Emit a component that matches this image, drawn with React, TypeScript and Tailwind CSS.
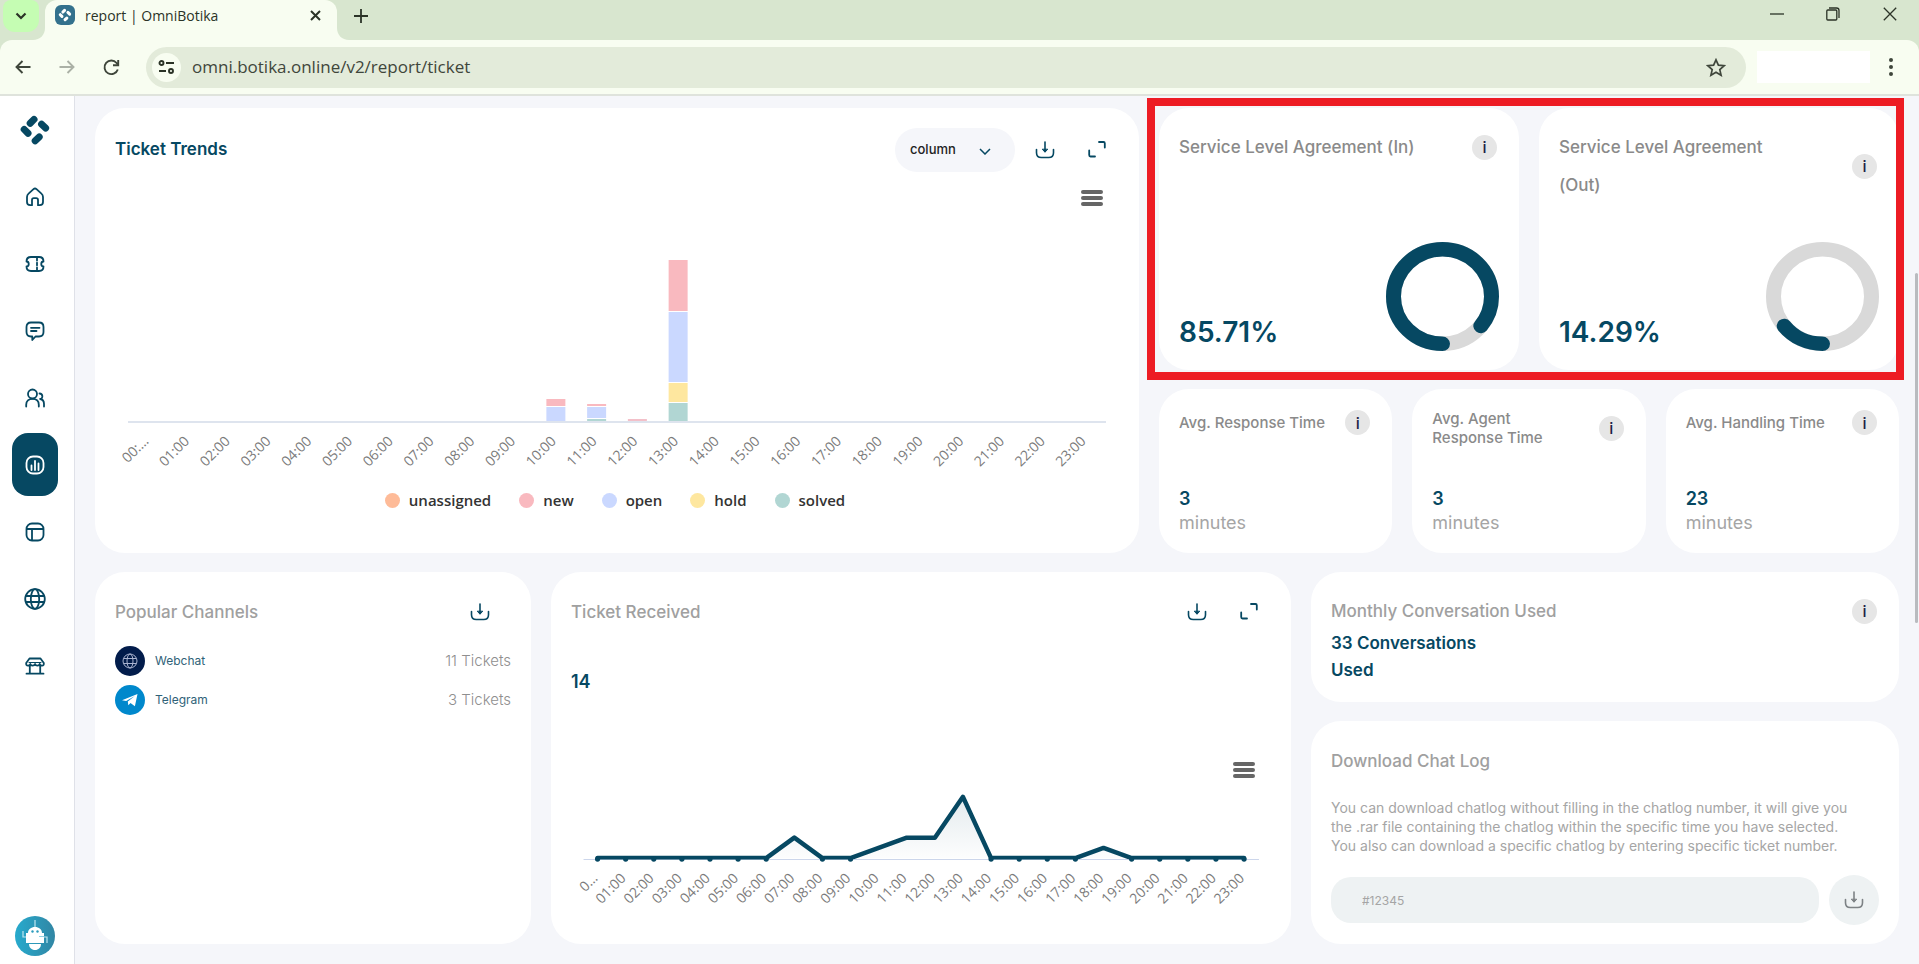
import type { ReactNode } from "react";
import clsx from "clsx";

const HOURS = Array.from({ length: 24 }, (_, i) => `${String(i).padStart(2, "0")}:00`);

const SERIES = [
    { name: "unassigned", dot: "bg-[#febb98]" },
    { name: "new", dot: "bg-[#f9b9bf]" },
    { name: "open", dot: "bg-[#cad8ff]" },
    { name: "hold", dot: "bg-[#fee79f]" },
    { name: "solved", dot: "bg-[#b1d6d3]" },
];

// bars per hour, each part listed from the axis upwards
const BARS = [
    { hour: 10, parts: [{ h: 15, fill: "#cad8ff" }, { h: 8, fill: "#f9b9bf" }] },
    { hour: 11, parts: [{ h: 3, fill: "#b1d6d3" }, { h: 12, fill: "#cad8ff" }, { h: 3, fill: "#f9b9bf" }] },
    { hour: 12, parts: [{ h: 3, fill: "#f3c0c9" }] },
    {
        hour: 13,
        parts: [
            { h: 19, fill: "#b1d6d3" },
            { h: 20, fill: "#fee79f" },
            { h: 71, fill: "#cad8ff" },
            { h: 52, fill: "#f9b9bf" },
        ],
    },
];

const RECEIVED = [0, 0, 0, 0, 0, 0, 0, 2, 0, 0, 1, 2, 2, 6, 0, 0, 0, 0, 1, 0, 0, 0, 0, 0];

const AVERAGES = [
    { title: "Avg. Response Time", value: 3 },
    { title: "Avg. Agent Response Time", value: 3 },
    { title: "Avg. Handling Time", value: 23 },
];

function Card({ className, children }: { className?: string; children: ReactNode }) {
    return <section className={clsx("rounded-[30px] bg-white px-5 pt-5", className)}>{children}</section>;
}

function InfoBadge() {
    return (
        <button
            aria-label="Info"
            className="mr-0.5 flex size-[25px] shrink-0 items-center justify-center rounded-full bg-[#e6e6e6] text-base font-medium text-[#1d2145]"
        >
            i
        </button>
    );
}

function DownloadIcon() {
    return (
        <svg width="20" height="20" viewBox="0 0 20 20" fill="none" stroke="currentColor" strokeWidth="1.6" strokeLinecap="round">
            <path d="M1.5 9.5v3.2c0 3 1.8 4.8 4.8 4.8h7.4c3 0 4.8-1.8 4.8-4.8V9.5" />
            <path d="M10 2v9.5" />
            <path d="M7.5 9.5 10 12.2l2.5-2.7z" fill="currentColor" strokeLinejoin="round" strokeWidth="1" />
        </svg>
    );
}

function IconButton({ label, children }: { label: string; children: ReactNode }) {
    return (
        <button aria-label={label} className="flex h-10 w-11 items-center justify-center text-[#064862]">
            {children}
        </button>
    );
}

function ExpandIcon() {
    return (
        <svg width="18" height="18" viewBox="0 0 18 18" fill="none" stroke="currentColor" strokeWidth="1.8" strokeLinecap="round" strokeLinejoin="round">
            <path d="M11 1h4.500q1.300 0 1.300 1.300V6.500" />
            <path d="M1.200 9.500V14q0 1.500 1.300 1.500H7" />
        </svg>
    );
}

function ChartMenu() {
    return (
        <button aria-label="Chart menu" className="mr-4 flex w-[22px] flex-col gap-0.5 self-end">
            <span className="h-1 rounded-full bg-[#666]" />
            <span className="h-1 rounded-full bg-[#666]" />
            <span className="h-1 rounded-full bg-[#666]" />
        </button>
    );
}

function TrendsChart() {
    const step = 40.75;
    return (
        <svg viewBox="0 0 1004 225" className="mt-11 block w-full" role="img" aria-label="Ticket trends by hour">
            {BARS.map(({ hour, parts }) => {
                let y = 172;
                return parts.map((p, i) => {
                    y -= p.h;
                    return (
                        <rect key={`${hour}-${i}`} x={13 + step * (hour + 0.5) - 9.5} y={y} width="19" height={Math.max(p.h - 1, 2)} fill={p.fill} />
                    );
                });
            })}
            <path d="M13 172h978" stroke="#d3dbe8" strokeWidth="1.5" />
            <g fill="#7b7b7b" fontSize="14" fontFamily="'Open Sans', 'Noto Sans', sans-serif" textAnchor="end">
                {HOURS.map((h, i) => {
                    const x = 13 + step * (i + 0.5) + 1;
                    return (
                        <text key={h} x={x} y="192" transform={`rotate(-45 ${x} 192)`}>
                            {i === 0 ? "00:…" : h}
                        </text>
                    );
                })}
            </g>
        </svg>
    );
}

function ReceivedChart() {
    const pts = RECEIVED.map((v, i) => [26.5 + i * 28.07, 73 - v * 10.2]);
    const line = pts.map((p) => p.join(",")).join(" ");
    return (
        <svg viewBox="0 0 699 125" className="mt-[7px] block w-full" role="img" aria-label="Tickets received by hour">
            <defs>
                <linearGradient id="area" x1="0" y1="0" x2="0" y2="1">
                    <stop offset="0" stopColor="#064862" stopOpacity="0.11" />
                    <stop offset="1" stopColor="#064862" stopOpacity="0.01" />
                </linearGradient>
                <clipPath id="plot">
                    <rect width="699" height="74.5" />
                </clipPath>
            </defs>
            <path d="M12.5 74.5H687" stroke="#ccd6eb" />
            <polygon points={`${pts[0][0]},73 ${line} ${pts[23][0]},73`} fill="url(#area)" />
            <polyline points={line} fill="none" stroke="#064862" strokeWidth="4.5" strokeLinejoin="round" strokeLinecap="round" clipPath="url(#plot)" />
            {pts.map(([x, y], i) => RECEIVED[i] === 0 && <circle key={i} cx={x} cy={y + 1} r="2.6" fill="#064862" />)}
            <g fill="#7b7b7b" fontSize="14" fontFamily="'Open Sans', 'Noto Sans', sans-serif" textAnchor="end">
                {HOURS.map((h, i) => {
                    const x = pts[i][0] + 1;
                    return (
                        <text key={h} x={x} y="94" transform={`rotate(-45 ${x} 94)`}>
                            {i === 0 ? "0…" : h}
                        </text>
                    );
                })}
            </g>
        </svg>
    );
}

function Donut({ percent }: { percent: number }) {
    return (
        <svg width="113" height="109" viewBox="0 0 113 113" preserveAspectRatio="none" fill="none" strokeWidth="15">
            <circle cx="56.5" cy="56.5" r="49" stroke="#d9d9d9" />
            <circle
                cx="56.5"
                cy="56.5"
                r="49"
                stroke="#064862"
                strokeLinecap="round"
                pathLength="100"
                strokeDasharray={`${percent} 100`}
                transform="rotate(90 56.5 56.5)"
            />
        </svg>
    );
}

function SlaCard({ title, percent }: { title: string; percent: number }) {
    return (
        <Card className="flex min-h-[262px] flex-col justify-between pb-[19px]">
            <div className="flex items-center justify-between">
                <h2 className="max-w-[240px] text-[17px] leading-[38px] font-medium text-[#8a8a8a]">{title}</h2>
                <InfoBadge />
            </div>
            <div className="flex items-end justify-between">
                <span className="text-[28px] leading-[38px] font-semibold text-[#064862]">{percent}%</span>
                <Donut percent={percent} />
            </div>
        </Card>
    );
}

function Logo({ className }: { className?: string }) {
    return (
        <svg viewBox="0 0 32 32" className={className} stroke="currentColor" strokeWidth="7" strokeLinecap="round">
            <path d="M11.2 9.2 15 5.4M22.6 10.2l4 3.8M5.2 15.4l3.8 3.8M16.2 26.8l4-3.8" />
        </svg>
    );
}

const NAV: { label: string; active?: boolean; icon: ReactNode }[] = [
    {
        label: "Home",
        icon: <path d="M2 10c0-1.5.6-2.600 1.800-3.600l4.700-4.200c.9-.8 2.100-.8 3 0l4.700 4.200C17.400 7.400 18 8.500 18 10v5c0 2.200-1 3.200-3.200 3.200H13V13c0-1.200-.6-1.800-1.800-1.800H8.800C7.600 11.200 7 11.800 7 13v5.200H5.200C3 18.200 2 17.200 2 15z" />,
    },
    {
        label: "Tickets",
        icon: (
            <>
                <path d="M1.500 7.500C1.500 4.300 2.800 3 6 3h8c3.200 0 4.500 1.300 4.500 4.500-3 0-3 5 0 5 0 3.200-1.300 4.500-4.500 4.500H6c-3.200 0-4.500-1.300-4.500-4.500 3 0 3-5 0-5z" />
                <path d="M12 3v3.500M12 8.700v2.600M12 13.500V17" />
            </>
        ),
    },
    {
        label: "Chats",
        icon: (
            <>
                <path d="M6 1.500h8c3 0 4.500 1.500 4.500 4.500v5c0 3-1.500 4.500-4.500 4.500h-3.500L7.300 19v-3.500H6c-3 0-4.500-1.500-4.500-4.500V6c0-3 1.500-4.500 4.500-4.500z" />
                <path d="M6 6.800h8.500M6 10h5.500" />
            </>
        ),
    },
    {
        label: "Customers",
        icon: (
            <>
                <circle cx="7.500" cy="6" r="4.500" />
                <path d="M1.200 18.500v-1.700c0-3.700 2.400-6 6.300-6s6.300 2.300 6.300 6v1.700M14.500 5.500c3.600 0 3.800 5.300.6 5.500 2.800.3 3.900 2 3.900 5v2.500" />
            </>
        ),
    },
    {
        label: "Reports",
        active: true,
        icon: (
            <>
                <rect x="1.500" y="1.500" width="17" height="17" rx="6.500" />
                <path d="M6.500 10.500v4.500M10 6v9M13.500 8.500V15" />
            </>
        ),
    },
    {
        label: "Boards",
        icon: (
            <>
                <rect x="1.500" y="1.500" width="17" height="17" rx="5.500" />
                <path d="M2 7h16M7 7v11" />
            </>
        ),
    },
    {
        label: "Channels",
        icon: (
            <>
                <circle cx="10" cy="10" r="9.800" />
                <ellipse cx="10" cy="10" rx="4.200" ry="9.800" />
                <path d="M1 7h18M1 13h18" />
            </>
        ),
    },
    {
        label: "Store",
        icon: (
            <>
                <path d="M4.500 2.500h11L18.800 7c.3 1.700-.5 2.700-1.700 2.700-1.500 0-2.200-.6-2.400-1.700-.3 1.100-1 1.700-2.300 1.700S10.300 9.100 10 8c-.3 1.100-1.100 1.700-2.400 1.700S5.600 9.100 5.300 8c-.2 1.100-.9 1.700-2.400 1.700C1.700 9.700.9 8.700 1.200 7zM4.800 9.700v7.800M15.200 9.700v7.800M1.500 17.700h17" />
                <path d="M4 6.500h12" strokeWidth="1" />
            </>
        ),
    },
];

function BotAvatar() {
    return (
        <svg width="40" height="40" viewBox="0 0 40 40">
            <defs>
                <linearGradient id="bot" x1="0" x2="1">
                    <stop offset="0" stopColor="#27aacd" />
                    <stop offset="1" stopColor="#3186a4" />
                </linearGradient>
            </defs>
            <circle cx="20" cy="20" r="20" fill="url(#bot)" />
            <path d="M20 4v7M8 15v6h4M32 27v-6h-4" stroke="#bfe6f1" fill="none" strokeWidth="1.200" />
            <path d="M13 17c0-3.500 3-6 7-6s7 2.500 7 6h2v10H11V17z" fill="#fff" />
            <path d="M14 28h12c0 3.500-2.500 6-6 6s-6-2.500-6-6z" fill="#fff" />
            <circle cx="17.500" cy="15.500" r="1.200" fill="#2a9bbd" />
            <circle cx="22.500" cy="15.500" r="1.200" fill="#2a9bbd" />
            <path d="M24 20.500h5" stroke="#8fd0e2" />
        </svg>
    );
}

function Browser() {
    return (
        <header className="bg-[#d8e6cf] font-['Open_Sans','Noto_Sans',sans-serif] text-[#2b3327]">
            <div className="flex h-10 items-start pl-[3px]">
                <button aria-label="Search tabs" className="flex h-8 w-9 items-center justify-center rounded-t-lg rounded-b-xl bg-[#c5fdb3]">
                    <svg width="12" height="8" viewBox="0 0 12 8" fill="none" stroke="currentColor" strokeWidth="2.200">
                        <path d="m1.500 1.500 4.500 4.500 4.500-4.500" />
                    </svg>
                </button>
                <div className="relative ml-1.5 flex h-full w-[292px] items-start rounded-t-xl bg-[#f8fdf1] pt-[5px] pl-2.5">
                    <svg className="absolute bottom-0 -left-3 text-[#f8fdf1]" width="12" height="12" viewBox="0 0 12 12" fill="currentColor">
                        <path d="M12 0v12H0C7 12 12 7 12 0z" />
                    </svg>
                    <svg className="absolute -right-3 bottom-0 text-[#f8fdf1]" width="12" height="12" viewBox="0 0 12 12" fill="currentColor">
                        <path d="M0 0v12h12C5 12 0 7 0 0z" />
                    </svg>
                    <span className="flex size-5 items-center justify-center rounded-md bg-[#33718d] text-white">
                        <Logo className="size-3.5" />
                    </span>
                    <span className="ml-2.5 text-sm leading-[22px]">report | OmniBotika</span>
                    <button aria-label="Close tab" className="mr-3 ml-auto flex size-5 items-center justify-center">
                        <svg width="11" height="11" viewBox="0 0 11 11" stroke="currentColor" strokeWidth="2">
                            <path d="m1 1 9 9M10 1l-9 9" />
                        </svg>
                    </button>
                </div>
                <button aria-label="New tab" className="ml-3 flex h-8 w-6 items-center justify-center">
                    <svg width="14" height="14" viewBox="0 0 14 14" stroke="currentColor" strokeWidth="1.800">
                        <path d="M7 0v14M0 7h14" />
                    </svg>
                </button>
                <div className="ml-auto flex h-7 items-center">
                    <button aria-label="Minimize" className="flex w-14 justify-center">
                        <svg width="14" height="14" viewBox="0 0 14 14" stroke="currentColor" strokeWidth="1.300">
                            <path d="M0 7h14" />
                        </svg>
                    </button>
                    <button aria-label="Restore" className="flex w-14 justify-center">
                        <svg width="14" height="14" viewBox="0 0 14 14" fill="none" stroke="currentColor" strokeWidth="1.300">
                            <rect x=".8" y="3" width="10" height="10" rx="1" />
                            <path d="M3 1h7.500Q13 1 13 3.500V11" />
                        </svg>
                    </button>
                    <button aria-label="Close" className="flex w-[58px] justify-center">
                        <svg width="14" height="14" viewBox="0 0 14 14" stroke="currentColor" strokeWidth="1.300">
                            <path d="m.8.8 12.400 12.400M13.200.8.8 13.200" />
                        </svg>
                    </button>
                </div>
            </div>
            <div className="flex h-14 items-center rounded-t-xl border-b-2 border-[#dfe3dc] bg-[#f8fdf1] pr-[18px] pl-[11px]">
                <button aria-label="Back" className="flex size-6 items-center justify-center">
                    <svg width="16" height="14" viewBox="0 0 16 14" fill="none" stroke="#3f463b" strokeWidth="1.900">
                        <path d="M15.500 7H1.500M7.500 1l-6 6 6 6" />
                    </svg>
                </button>
                <button aria-label="Forward" className="ml-5 flex size-6 items-center justify-center">
                    <svg width="16" height="14" viewBox="0 0 16 14" fill="none" stroke="#abb1a6" strokeWidth="1.900">
                        <path d="M.5 7h14M8.500 1l6 6-6 6" />
                    </svg>
                </button>
                <button aria-label="Reload" className="ml-5 flex size-6 items-center justify-center">
                    <svg width="17" height="17" viewBox="0 0 17 17" fill="none" stroke="#3f463b" strokeWidth="1.900">
                        <path d="M14.800 10.500A6.800 6.800 0 1 1 13.600 4L15 5.500" />
                        <path d="M15.200 1v5.200H10" />
                    </svg>
                </button>
                <div className="ml-[23px] flex h-[41px] flex-1 items-center rounded-full bg-[#e3ebda] pr-5 pl-1.5">
                    <button aria-label="Site information" className="flex size-[29px] items-center justify-center rounded-full bg-[#f8fdf1]">
                        <svg width="17" height="14" viewBox="0 0 17 14" fill="none" stroke="#2b3327" strokeWidth="1.900">
                            <circle cx="3.500" cy="3" r="2" />
                            <path d="M8 3h8M1 11h7" />
                            <circle cx="13" cy="11" r="2" />
                        </svg>
                    </button>
                    <input
                        aria-label="Address"
                        defaultValue="omni.botika.online/v2/report/ticket"
                        className="ml-[11px] flex-1 bg-transparent text-[17px] text-[#3f463b] outline-none"
                    />
                    <button aria-label="Bookmark this tab">
                        <svg width="20" height="19" viewBox="0 0 20 19" fill="none" stroke="#3f463b" strokeWidth="1.700">
                            <path d="m10 1.800 2.400 5.400 5.800.5-4.400 3.900 1.300 5.700L10 14.300l-5.100 3 1.300-5.700L1.800 7.700l5.800-.5z" />
                        </svg>
                    </button>
                </div>
                <div className="ml-[11px] h-8 w-[113px] bg-white" />
                <button aria-label="Menu" className="ml-[11px] flex h-6 w-5 items-center justify-center">
                    <svg width="4" height="18" viewBox="0 0 4 18" fill="#3f463b">
                        <circle cx="2" cy="2" r="2" />
                        <circle cx="2" cy="9" r="2" />
                        <circle cx="2" cy="16" r="2" />
                    </svg>
                </button>
            </div>
        </header>
    );
}

export default function App() {
    return (
        <div className="relative flex h-screen flex-col overflow-hidden bg-[#f5f6fa] font-['Inter',sans-serif]">
            <Browser />
            <div className="flex min-h-0 flex-1">
                <aside className="flex w-[75px] shrink-0 flex-col items-center border-r border-[#dfe1e8] bg-white pt-[18px] pr-1 pb-2">
                    <Logo className="size-8 text-[#064862]" />
                    <nav className="mt-[19px] flex flex-col gap-1">
                        {NAV.map((item) => (
                            <a
                                key={item.label}
                                href="#"
                                aria-label={item.label}
                                className={clsx(
                                    "flex h-[63px] w-[46px] items-center justify-center rounded-2xl",
                                    item.active ? "bg-[#064862] text-white" : "text-[#064862]"
                                )}
                            >
                                <svg width="22" height="22" viewBox="-1 -1 22 22" fill="none" stroke="currentColor" strokeWidth="1.800" strokeLinecap="round" strokeLinejoin="round">
                                    {item.icon}
                                </svg>
                            </a>
                        ))}
                    </nav>
                    <button aria-label="Account" className="mt-auto">
                        <BotAvatar />
                    </button>
                </aside>

                <main className="flex min-w-0 flex-1 flex-col gap-[19px] px-5 pt-3">
                    <div className="grid grid-cols-12 gap-5">
                        <Card className="col-span-7 flex flex-col pb-5">
                            <div className="flex items-center gap-2">
                                <h2 className="mr-auto text-[17px] font-semibold text-[#064862]">Ticket Trends</h2>
                                <div className="relative">
                                    <select
                                        aria-label="Chart type"
                                        className="h-11 w-[120px] appearance-none rounded-full bg-[#f5f6fa] pl-[15px] text-[13px] font-medium text-[#222]"
                                    >
                                        <option>column</option>
                                    </select>
                                    <svg className="pointer-events-none absolute top-5 right-6 text-[#064862]" width="12" height="7" viewBox="0 0 12 7" fill="none" stroke="currentColor" strokeWidth="1.500">
                                        <path d="m1 1 5 5 5-5" />
                                    </svg>
                                </div>
                                <IconButton label="Download">
                                    <DownloadIcon />
                                </IconButton>
                                <IconButton label="Expand">
                                    <ExpandIcon />
                                </IconButton>
                            </div>
                            <div className="mt-[18px] flex flex-col">
                                <ChartMenu />
                            </div>
                            <TrendsChart />
                            <ul className="mt-[15px] flex justify-center gap-7 pr-1 font-['Open_Sans','Noto_Sans',sans-serif] text-[15px] leading-5 font-semibold text-[#333]">
                                {SERIES.map((s) => (
                                    <li key={s.name} className="flex items-center gap-[9px]">
                                        <span className={clsx("size-[15px] rounded-full", s.dot)} />
                                        {s.name}
                                    </li>
                                ))}
                            </ul>
                        </Card>

                        <div className="col-span-5 flex flex-col gap-[19px]">
                            <div className="relative grid grid-cols-2 gap-5">
                                <SlaCard title="Service Level Agreement (In)" percent={85.71} />
                                <SlaCard title="Service Level Agreement (Out)" percent={14.29} />
                                <div className="pointer-events-none absolute -inset-y-2.5 -right-[5px] -left-3 border-8 border-[#ed1c24]" />
                            </div>
                            <div className="grid grid-cols-3 gap-5">
                                {AVERAGES.map((a) => (
                                    <Card key={a.title} className="flex min-h-[164px] flex-col justify-between pb-[18px]">
                                        <div className="flex min-h-[27px] items-center justify-between">
                                            <h2 className="max-w-[150px] text-[15px] leading-[19px] font-medium text-[#8a8a8a]">{a.title}</h2>
                                            <InfoBadge />
                                        </div>
                                        <p className="text-lg leading-6 text-[#a5a5a5]">
                                            <strong className="block font-semibold text-[#064862]">{a.value}</strong>
                                            minutes
                                        </p>
                                    </Card>
                                ))}
                            </div>
                        </div>
                    </div>

                    <div className="grid grid-cols-12 gap-5">
                        <Card className="col-span-3 pb-5">
                            <div className="flex items-center justify-between pr-[9px]">
                                <h2 className="pt-0.5 text-[17px] font-medium text-[#a0a0a0]">Popular Channels</h2>
                                <IconButton label="Download">
                                    <DownloadIcon />
                                </IconButton>
                            </div>
                            <ul className="mt-3.5 flex flex-col gap-[9px] text-xs text-[#2f6278]">
                                <li className="flex items-center gap-2.5">
                                    <svg width="30" height="30" viewBox="0 0 30 30" fill="none" stroke="#a9b3d0">
                                        <circle cx="15" cy="15" r="15" fill="#021c4b" stroke="none" />
                                        <circle cx="15" cy="15" r="7" />
                                        <ellipse cx="15" cy="15" rx="3" ry="7" />
                                        <path d="M8.500 12.500h13M8.500 17.500h13" />
                                    </svg>
                                    Webchat
                                    <span className="ml-auto text-[15px] font-light text-[#8f8f8f]">11 Tickets</span>
                                </li>
                                <li className="flex items-center gap-2.5">
                                    <svg width="30" height="30" viewBox="0 0 30 30">
                                        <circle cx="15" cy="15" r="15" fill="#0088cc" />
                                        <path d="M7 15.200 22.500 9l-2.600 12.300-4.400-3.200-2.200 2.200-.5-3.800 7-5.500-8.600 5z" fill="#fff" />
                                    </svg>
                                    Telegram
                                    <span className="ml-auto text-[15px] font-light text-[#8f8f8f]">3 Tickets</span>
                                </li>
                            </ul>
                        </Card>

                        <Card className="col-span-5 flex flex-col">
                            <div className="flex items-center gap-2">
                                <h2 className="mr-auto pt-0.5 text-[17px] font-medium text-[#a0a0a0]">Ticket Received</h2>
                                <IconButton label="Download">
                                    <DownloadIcon />
                                </IconButton>
                                <IconButton label="Expand">
                                    <ExpandIcon />
                                </IconButton>
                            </div>
                            <strong className="mt-9 text-lg leading-7 font-semibold text-[#064862]">14</strong>
                            <div className="mt-[66px] flex flex-col">
                                <ChartMenu />
                            </div>
                            <ReceivedChart />
                        </Card>

                        <div className="col-span-4 flex flex-col gap-[19px]">
                            <Card className="min-h-[130px]">
                                <div className="flex h-[38px] items-center justify-between">
                                    <h2 className="pt-0.5 text-[17px] font-medium text-[#a0a0a0]">Monthly Conversation Used</h2>
                                    <InfoBadge />
                                </div>
                                <p className="w-[160px] text-[17px] leading-[27px] font-semibold text-[#064862]">33 Conversations Used</p>
                            </Card>
                            <Card className="pb-[19px]">
                                <h2 className="text-[17px] leading-10 font-medium text-[#a0a0a0]">
                                    <label htmlFor="chatlog">Download Chat Log</label>
                                </h2>
                                <p className="mt-[17px] max-w-[530px] text-sm leading-[19px] text-[#a5a5a5]">
                                    You can download chatlog without filling in the chatlog number, it will give you the .rar file containing the chatlog
                                    within the specific time you have selected. You also can download a specific chatlog by entering specific ticket number.
                                </p>
                                <div className="mt-5 flex items-center gap-2.5">
                                    <input
                                        id="chatlog"
                                        placeholder="#12345"
                                        className="h-[46px] min-w-0 flex-1 rounded-[20px] bg-[#eef2f3] px-[31px] text-xs outline-none placeholder:text-[#a5a5a5]"
                                    />
                                    <button aria-label="Download chat log" className="flex size-[50px] items-center justify-center rounded-full bg-[#eef2f3] text-[#7d8285]">
                                        <DownloadIcon />
                                    </button>
                                </div>
                            </Card>
                        </div>
                    </div>
                </main>
            </div>
            <div className="absolute top-[273px] right-px h-[350px] w-[3px] rounded-full bg-[#b9bbbf]" />
        </div>
    );
}
